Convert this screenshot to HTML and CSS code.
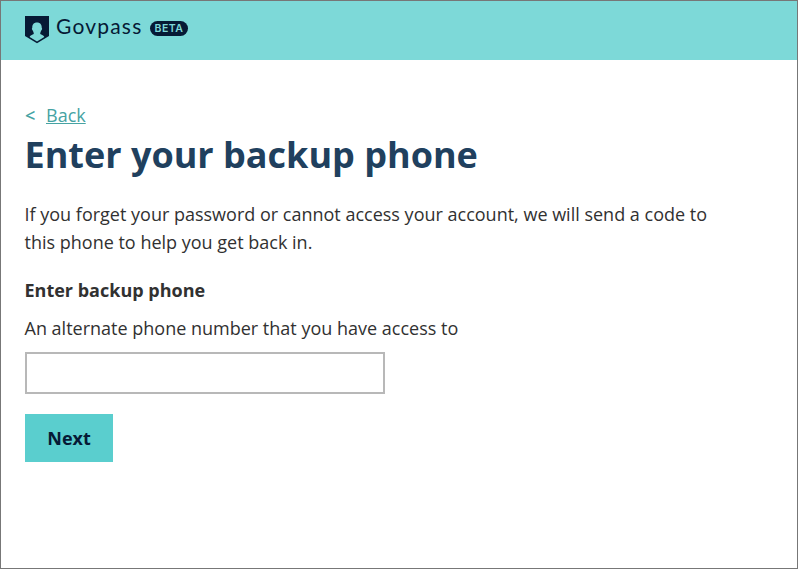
FILE: index.html
```html
<!DOCTYPE html>
<html lang="en">
<head>
<meta charset="utf-8">
<title>Govpass</title>
<link rel="stylesheet" href="styles.css">
</head>
<body>
<header class="header">
  <svg class="logo" width="24" height="28" viewBox="0 0 24 28" aria-hidden="true">
    <path fill="#061a35" d="M0 0H24V20L12 27.3L0 20Z"/>
    <path fill="#7dd9d8" d="M12 6.4C8.6 6.4 7.3 8.6 7.3 11.2C7.3 12 6.8 12.2 6.9 13C7 13.8 7.7 14.2 8 15C8.4 16.3 8.8 16.7 8.8 17.6C8.8 19 5.2 18.8 4.7 21L12 25.5L19.3 21C18.8 18.8 15.2 19 15.2 17.6C15.2 16.7 15.6 16.3 16 15C16.3 14.2 17 13.8 17.1 13C17.2 12.2 16.7 12 16.7 11.2C16.7 8.6 15.4 6.4 12 6.4Z"/>
  </svg>
  <span class="brand">Govpass</span>
  <span class="badge">BETA</span>
</header>
<main class="content">
  <div class="back"><span class="chevron">&lt;</span><a href="#">Back</a></div>
  <h1>Enter your backup phone</h1>
  <p class="intro">If you forget your password or cannot access your account, we will send a code to this phone to help you get back in.</p>
  <form>
    <label class="label" for="phone">Enter backup phone</label>
    <span class="hint">An alternate phone number that you have access to</span>
    <input class="input" id="phone" type="tel">
    <button class="button" type="button">Next</button>
  </form>
</main>
</body>
</html>
```
FILE: styles.css
```css
* { box-sizing: border-box; }
html, body { height: 100%; }
body {
  margin: 0;
  border: 1px solid #777;
  background: #fff;
  color: #313131;
  font: 18px/28px "Open Sans", sans-serif;
  overflow: hidden;
}
.header {
  display: flex;
  align-items: flex-start;
  height: 59px;
  padding: 15px 24px 0;
  background: #7dd9d8;
  color: #061a35;
}
.logo { flex: none; }
.brand {
  width: 86px;
  margin: -4px 0 0 7px;
  font: 400 21px/28px Lato, sans-serif;
  letter-spacing: 1.2px;
}
.badge {
  width: 38px;
  height: 15px;
  margin: 5px 0 0 8px;
  border-radius: 8px;
  background: #061a35;
  color: #7dd9d8;
  font: 600 10.5px/15px Inter, sans-serif;
  letter-spacing: 0.5px;
  text-align: center;
}
.content { padding: 41px 24px 0; }
.back { display: flex; color: #46a3a3; }
.chevron { width: 21px; font-weight: 600; }
.back a { color: inherit; }
h1 {
  margin: 1px 0 0 -0.5px;
  color: #20405e;
  font-size: 36px;
  line-height: 50px;
  font-weight: 700;
}
.intro { width: 710px; margin: 20px 0 0 -0.5px; }
form { display: flex; flex-direction: column; align-items: flex-start; margin-top: 20px; }
.label { margin-left: -0.5px; font-weight: 700; }
.hint { margin: 10px 0 0 -0.5px; }
.input {
  width: 360px;
  height: 42px;
  margin-top: 10px;
  padding: 0 10px;
  border: 2px solid #b8b8b8;
  font: inherit;
}
.button {
  width: 88px;
  height: 48px;
  margin-top: 20px;
  padding: 0;
  border: 0;
  background: #5acece;
  color: #061a35;
  font: inherit;
  font-weight: 700;
}
```
